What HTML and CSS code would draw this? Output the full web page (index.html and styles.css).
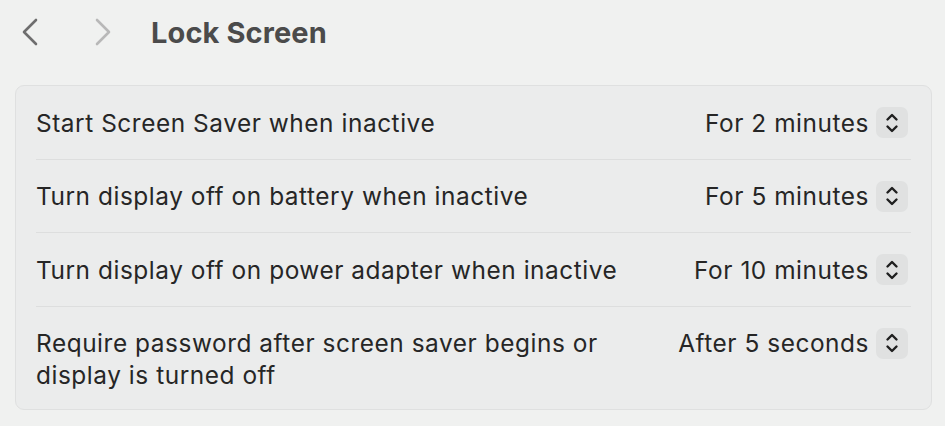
FILE: index.html
```html
<!DOCTYPE html>
<html>
<head>
<meta charset="utf-8">
<link rel="stylesheet" href="styles.css">
</head>
<body>
<div class="toolbar">
  <span class="nav back"><svg width="18" height="28" viewBox="0 0 18 28"><path d="M15 2 L3 14 L15 26" fill="none" stroke="#6e6e6e" stroke-width="2.6" stroke-linecap="round" stroke-linejoin="round"/></svg></span>
  <span class="nav fwd"><svg width="18" height="28" viewBox="0 0 18 28"><path d="M3 2 L15 14 L3 26" fill="none" stroke="#b8b8b8" stroke-width="2.6" stroke-linecap="round" stroke-linejoin="round"/></svg></span>
  <h1 class="title">Lock Screen</h1>
</div>
<div class="panel">
  <div class="row">
    <div class="label">Start Screen Saver when inactive</div>
    <div class="value"><span>For 2 minutes</span><span class="stepper"><svg width="14" height="22" viewBox="0 0 14 22"><path d="M2.5 7.5 L7 3 L11.5 7.5 M2.5 14.5 L7 19 L11.5 14.5" fill="none" stroke="#1f1f1f" stroke-width="2.4" stroke-linecap="round" stroke-linejoin="round"/></svg></span></div>
  </div>
  <div class="row">
    <div class="label">Turn display off on battery when inactive</div>
    <div class="value"><span>For 5 minutes</span><span class="stepper"><svg width="14" height="22" viewBox="0 0 14 22"><path d="M2.5 7.5 L7 3 L11.5 7.5 M2.5 14.5 L7 19 L11.5 14.5" fill="none" stroke="#1f1f1f" stroke-width="2.4" stroke-linecap="round" stroke-linejoin="round"/></svg></span></div>
  </div>
  <div class="row">
    <div class="label">Turn display off on power adapter when inactive</div>
    <div class="value"><span>For 10 minutes</span><span class="stepper"><svg width="14" height="22" viewBox="0 0 14 22"><path d="M2.5 7.5 L7 3 L11.5 7.5 M2.5 14.5 L7 19 L11.5 14.5" fill="none" stroke="#1f1f1f" stroke-width="2.4" stroke-linecap="round" stroke-linejoin="round"/></svg></span></div>
  </div>
  <div class="row last">
    <div class="label">Require password after screen saver begins or<br>display is turned off</div>
    <div class="value"><span>After 5 seconds</span><span class="stepper"><svg width="14" height="22" viewBox="0 0 14 22"><path d="M2.5 7.5 L7 3 L11.5 7.5 M2.5 14.5 L7 19 L11.5 14.5" fill="none" stroke="#1f1f1f" stroke-width="2.4" stroke-linecap="round" stroke-linejoin="round"/></svg></span></div>
  </div>
</div>
</body>
</html>
```

FILE: styles.css
```css
html, body {
  margin: 0;
  padding: 0;
  background: #f0f1f0;
  font-family: Inter, "Noto Sans", sans-serif;
  color: #262626;
}
body {
  width: 945px;
  height: 426px;
  overflow: hidden;
}
.toolbar {
  display: flex;
  align-items: center;
  height: 64px;
  padding-left: 21px;
}
.nav {
  display: flex;
  width: 18px;
  height: 28px;
}
.fwd {
  margin-left: 55px;
}
.title {
  margin: 0 0 0 39px;
  font-size: 29px;
  font-weight: 700;
  color: #4b4b4b;
  letter-spacing: 0.1px;
}
.panel {
  margin: 21px 13px 0 15px;
  background: #ebecec;
  border: 1px solid #dfe0e0;
  border-radius: 9px;
  padding: 0 20px;
}
.row {
  display: flex;
  justify-content: space-between;
  align-items: flex-start;
  padding: 20.5px 0 20px 0;
  border-bottom: 1.5px solid #dddede;
  font-size: 24.4px;
  line-height: 32px;
  letter-spacing: 0.55px;
}
.row.last {
  border-bottom: none;
  padding-bottom: 18px;
}
.value {
  display: flex;
  align-items: center;
  gap: 7px;
}
.stepper {
  display: flex;
  align-items: center;
  justify-content: center;
  width: 32px;
  height: 31px;
  border-radius: 7px;
  background: #e0e1e1;
  margin-right: 3px;
}
```
